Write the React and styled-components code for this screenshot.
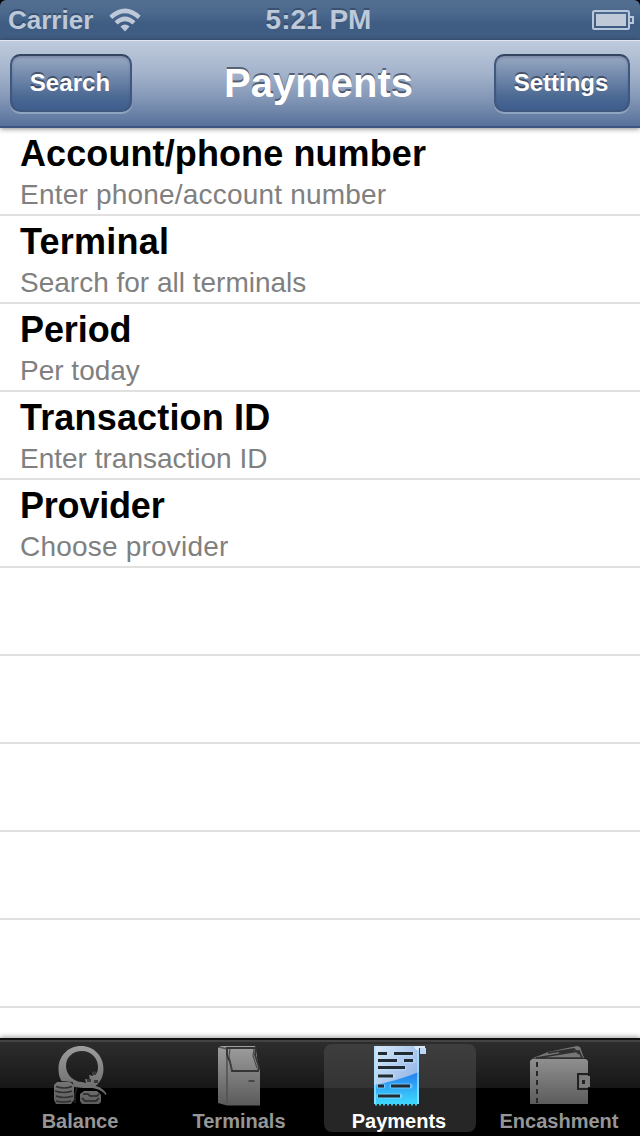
import React from "react";
import styled, { createGlobalStyle } from "styled-components";

const GlobalStyle = createGlobalStyle`
  * { box-sizing: border-box; }
  body {
    margin: 0;
    background: #000;
    font-family: "Liberation Sans", Helvetica, Arial, sans-serif;
  }
`;

const Screen = styled.div`
  width: 640px;
  height: 1136px;
  display: flex;
  flex-direction: column;
  overflow: hidden;
`;

const StatusBar = styled.header`
  height: 40px;
  flex: none;
  display: grid;
  grid-template-columns: 1fr auto 1fr;
  align-items: center;
  padding: 0 6px 0 8px;
  border-radius: 6px 6px 0 0;
  background: linear-gradient(#536e90 0%, #4c6a8e 30%, #3f5c82 60%, #3f5c82 100%);
  color: #bdc8d8;
  font-size: 28px;
  font-weight: bold;
  line-height: 40px;
  text-shadow: 0 -2px 0 rgba(40, 60, 90, 0.55);
`;

const Carrier = styled.div`
  display: flex;
  align-items: center;
  gap: 16px;
  font-size: 26px;
  letter-spacing: 0;
`;

const Clock = styled.div`
  margin-right: 5px;
`;

const BatterySlot = styled.div`
  display: flex;
  justify-content: flex-end;
`;

const NavBar = styled.nav`
  position: relative;
  z-index: 1;
  height: 88px;
  flex: none;
  display: flex;
  justify-content: space-between;
  align-items: flex-start;
  padding: 13px 10px 0;
  border-top: 1px solid #dfe6ee;
  border-bottom: 2px solid #3a5680;
  background: linear-gradient(#bfcbdd 0%, #a3b3cb 38%, #8296b6 68%, #57719b 100%);
  box-shadow: 0 1px 5px rgba(0, 0, 0, 0.45);
`;

const NavButton = styled.button`
  width: ${(p) => p.$width}px;
  height: 58px;
  padding: 0 2px 1px 0;
  border: 2px solid #40587d;
  border-top-color: #35445f;
  border-radius: 10px;
  background: linear-gradient(#97a8c2 0%, #7087aa 40%, #4c6993 75%, #3d5d8e 100%) padding-box, #3c5279;
  box-shadow: 0 2px 0 rgba(190, 204, 224, 0.45), inset 0 2px 2px rgba(50, 65, 95, 0.25);
  color: #fff;
  font-family: inherit;
  font-size: 24px;
  font-weight: bold;
  letter-spacing: ${(p) => p.$spacing}px;
  text-shadow: 0 -2px 0 rgba(40, 50, 70, 0.65);
`;

const NavTitle = styled.h1`
  margin: 5px 0 0 11px;
  color: #fff;
  font-size: 40px;
  font-weight: bold;
  line-height: 48px;
  text-shadow: 0 -2px 0 rgba(50, 60, 80, 0.7);
`;

const List = styled.main`
  flex: 1;
  overflow: hidden;
  background: #fff;
`;

const Row = styled.section`
  height: 88px;
  padding: 5px 20px 0;
  border-bottom: 2px solid #e0e0e0;
`;

const RowTitle = styled.h2`
  margin: 0;
  color: #000;
  font-size: 36px;
  font-weight: bold;
  line-height: 42px;
  letter-spacing: ${(p) => p.$spacing || 0}px;
`;

const RowDetail = styled.p`
  margin: 3px 0 0;
  color: #808080;
  font-size: 28px;
  line-height: 34px;
  letter-spacing: ${(p) => p.$spacing || 0}px;
`;

const TabBar = styled.footer`
  position: relative;
  height: 98px;
  flex: none;
  display: grid;
  grid-template-columns: repeat(4, 160px);
  border-top: 2px solid #111;
  background: linear-gradient(#434343 0 2px, #2d2d2d 2px, #171717 48px, #000 48px);
  box-shadow: 0 -1px 5px rgba(0, 0, 0, 0.4);
`;

const Tab = styled.div`
  width: 152px;
  height: 88px;
  margin: 4px;
  padding-right: ${(p) => p.$inset}px;
  display: flex;
  flex-direction: column;
  align-items: center;
  border-radius: 8px;
  background: ${(p) => (p.$active ? "linear-gradient(#3e3e3e, #343434 44px, #262626 44px, #262626)" : "none")};
  color: ${(p) => (p.$active ? "#fff" : "#969696")};

  svg { flex: none; }
`;

const TabLabel = styled.span`
  margin-top: 3px;
  font-size: 20px;
  font-weight: bold;
  line-height: 24px;
  white-space: nowrap;
`;

const WifiIcon = () => (
  <svg width="32" height="24" viewBox="0 0 32 24" fill="none" stroke="#bdc8d8" strokeWidth="4.4">
    <path d="M1.8 9.4 Q16 -3.6 30.2 9.4" />
    <path d="M7 14.9 Q16 6.8 25 14.9" />
    <path d="M11.4 18.6 Q16 14.4 20.6 18.6 L16 23.4Z" fill="#bdc8d8" stroke="none" />
  </svg>
);

const BatteryIcon = () => (
  <svg width="42" height="20" viewBox="0 0 42 20" fill="none">
    <rect x="1" y="1" width="36" height="18" rx="1.5" stroke="#b9c7db" strokeWidth="2" />
    <rect x="4" y="4" width="30" height="12" fill="#c0c9d7" />
    <path d="M38 7h3v6h-3" stroke="#b9c7db" strokeWidth="2" />
  </svg>
);

const MetalFill = ({ id }) => (
  <defs>
    <linearGradient id={id} x1="0" y1="0" x2="0" y2="60" gradientUnits="userSpaceOnUse">
      <stop offset="0" stopColor="#a0a0a0" />
      <stop offset="1" stopColor="#5c5c5c" />
    </linearGradient>
  </defs>
);

const BalanceIcon = () => (
  <svg width="60" height="62" viewBox="0 0 60 62">
    <MetalFill id="balanceMetal" />
    <path
      fill="url(#balanceMetal)"
      fillRule="evenodd"
      d="M31 2C18 2 8.500 12 8.500 25c0 5 1 9 3 12l11 1 2 5c6 1 12 1 18 1 6 1 10 3 13 7l1-1c-2-4-6-7-11-8 5-4 8-10 8-17C53.500 12 44 2 31 2zM32 7c9 0 16 7 16 16 0 3-.6 5-2 7l-2-3-1 5-4-1 1 5-5-1 1 4-4-1c-8 0-16-7-16-16S23 7 32 7z"
    />
    <path fill="url(#balanceMetal)" d="M4 41l3-3h13l4 3v15l-3 4H6l-2-4z" />
    <path d="M6 42.500q8 3 16 0M5 47q9 3 17 0M6 52q8 3 17 0M6 57q8 2 15 0" stroke="#303030" strokeWidth="1.5" fill="none" />
    <path fill="url(#balanceMetal)" d="M30 50l4-3h13l4 4v7l-2 2H32l-2-3z" />
    <path d="M33 50h5l2 2h7l2-2M32 54l3 3h11l3-3M27 43l-2 7v9" stroke="#262626" strokeWidth="1.5" fill="none" />
    <path d="M42 28h4v3h-4zM37 35h4v3h-4zM44 36h4v3h-4z" fill="#3a3a3a" />
  </svg>
);

const TerminalIcon = () => (
  <svg width="60" height="62" viewBox="0 0 60 62">
    <MetalFill id="terminalMetal" />
    <path fill="url(#terminalMetal)" d="M9 4l3-2h34l1 4 2 14 2 7v34.500H18L9 59z" />
    <path d="M10 3l8 2v56" stroke="#555" strokeWidth="1.7" fill="none" />
    <path d="M18 4h29l-1 7 4 12-1 4H23l-2-9-3-7z" stroke="#343434" strokeWidth="1.8" fill="none" />
    <path d="M21 5l-1 7 3 14M45 5l-1 7 4 12" stroke="#474747" strokeWidth="1.1" fill="none" />
    <path d="M39.500 37h6" stroke="#404040" strokeWidth="1.8" />
  </svg>
);

const PaymentsIcon = () => (
  <svg width="60" height="62" viewBox="0 0 60 62">
    <defs>
      <linearGradient id="paperTop" x1="0" y1="0" x2="1" y2="1">
        <stop offset="0" stopColor="#d9e9fa" />
        <stop offset="1" stopColor="#7ba4df" />
      </linearGradient>
      <linearGradient id="paperBottom" x1="0" y1="0" x2="0" y2="1">
        <stop offset="0" stopColor="#247eed" />
        <stop offset="1" stopColor="#3edaff" />
      </linearGradient>
    </defs>
    <path d="M5 2h45v58H5z" fill="url(#paperTop)" />
    <path d="M5 41Q28 37 50 28v32H5z" fill="url(#paperBottom)" />
    <path d="M6 2v58M49 5v55" stroke="#a5e5ff" strokeWidth="2" opacity=".7" />
    <path d="M45 2h11v2h-6v2h-3z" fill="#d9e7f7" />
    <path d="M51 4h6v6h-6z" fill="#bdd8f7" />
    <path d="M10 10h7M26 10h17M10 17h17M36 17h8M10 24h25M10 32h14M10 42h4M23 42h18M10 52h21" stroke="#bde8ff" strokeWidth="5" strokeLinecap="round" opacity=".45" />
    <path d="M9 9.500h9M25 9.500h19M9 16.500h19M35 16.500h9M9 23.500h27M9 32h15M9 42h6M22 42h19M9 52h22" stroke="#222a32" strokeWidth="3.2" />
    <path d="M6 60.500h43" stroke="#38cce8" strokeWidth="2" strokeDasharray="2 2" />
  </svg>
);

const WalletIcon = () => (
  <svg width="62" height="62" viewBox="0 0 62 62">
    <MetalFill id="walletMetal" />
    <path d="M4 14.500L20 8l29-6 3 1 4 11z" fill="#777" />
    <path d="M8 14L51 7l3 7zM20 9l26-4 5 5M31 9l15-3" stroke="#303030" strokeWidth="1.7" fill="none" />
    <path d="M2 17l2-2h54l2 2v43H2z" fill="url(#walletMetal)" />
    <path d="M9 18v41" stroke="#292929" strokeWidth="2" strokeDasharray="5 4" />
    <path d="M60 30H50v15h10" stroke="#222" strokeWidth="2" fill="#747474" />
    <path d="M52 32h10v11H52z" fill="#7d7d7d" />
    <path d="M54 36h3v4h-3z" fill="#222" />
  </svg>
);

const rows = [
  { title: "Account/phone number", detail: "Enter phone/account number", titleSpacing: 0.1, detailSpacing: 0.2 },
  { title: "Terminal", detail: "Search for all terminals", titleSpacing: 0.25 },
  { title: "Period", detail: "Per today", titleSpacing: -0.1 },
  { title: "Transaction ID", detail: "Enter transaction ID", titleSpacing: 0.17 },
  { title: "Provider", detail: "Choose provider", titleSpacing: -0.2, detailSpacing: 0.2 },
];

const blankRows = [0, 1, 2, 3, 4];

const tabs = [
  { label: "Balance", Icon: BalanceIcon, inset: 0 },
  { label: "Terminals", Icon: TerminalIcon, inset: 2 },
  { label: "Payments", Icon: PaymentsIcon, inset: 2, active: true },
  { label: "Encashment", Icon: WalletIcon, inset: 2 },
];

export default function App() {
  return (
    <>
      <GlobalStyle />
      <Screen>
        <StatusBar>
          <Carrier>Carrier <WifiIcon /></Carrier>
          <Clock>5:21 PM</Clock>
          <BatterySlot><BatteryIcon /></BatterySlot>
        </StatusBar>
        <NavBar>
          <NavButton $width={122} $spacing={0.1}>Search</NavButton>
          <NavTitle>Payments</NavTitle>
          <NavButton $width={136} $spacing={0}>Settings</NavButton>
        </NavBar>
        <List>
          {rows.map((row) => (
            <Row key={row.title}>
              <RowTitle $spacing={row.titleSpacing}>{row.title}</RowTitle>
              <RowDetail $spacing={row.detailSpacing}>{row.detail}</RowDetail>
            </Row>
          ))}
          {blankRows.map((n) => <Row key={n} />)}
        </List>
        <TabBar>
          {tabs.map(({ label, Icon, inset, active }) => (
            <Tab key={label} $inset={inset} $active={active}>
              <Icon />
              <TabLabel>{label}</TabLabel>
            </Tab>
          ))}
        </TabBar>
      </Screen>
    </>
  );
}
